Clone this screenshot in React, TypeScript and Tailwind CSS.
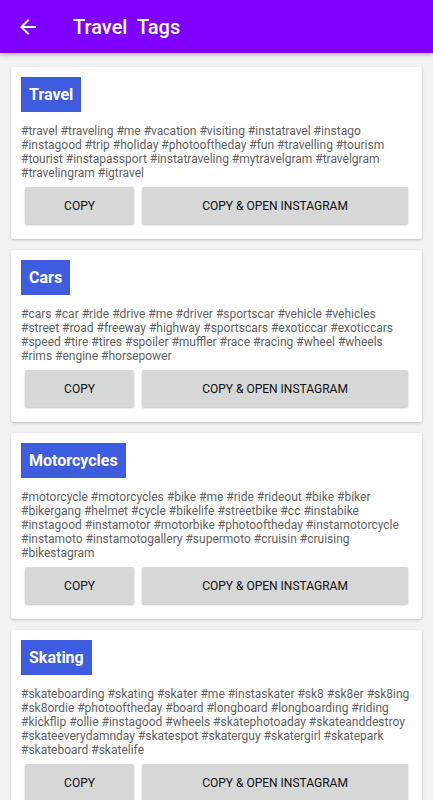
import { FC } from "react";

interface TagGroup {
  id: number;
  title: string;
  tags: string;
}

const groups: TagGroup[] = [
  {
    id: 1,
    title: "Travel",
    tags: "#travel #traveling #me #vacation #visiting #instatravel #instago #instagood #trip #holiday #photooftheday #fun #travelling #tourism #tourist #instapassport #instatraveling #mytravelgram #travelgram #travelingram #igtravel",
  },
  {
    id: 2,
    title: "Cars",
    tags: "#cars #car #ride #drive #me #driver #sportscar #vehicle #vehicles #street #road #freeway #highway #sportscars #exoticcar #exoticcars #speed #tire #tires #spoiler #muffler #race #racing #wheel #wheels #rims #engine #horsepower",
  },
  {
    id: 3,
    title: "Motorcycles",
    tags: "#motorcycle #motorcycles #bike #me #ride #rideout #bike #biker #bikergang #helmet #cycle #bikelife #streetbike #cc #instabike #instagood #instamotor #motorbike #photooftheday #instamotorcycle #instamoto #instamotogallery #supermoto #cruisin #cruising #bikestagram",
  },
  {
    id: 4,
    title: "Skating",
    tags: "#skateboarding #skating #skater #me #instaskater #sk8 #sk8er #sk8ing #sk8ordie #photooftheday #board #longboard #longboarding #riding #kickflip #ollie #instagood #wheels #skatephotoaday #skateanddestroy #skateeverydamnday #skatespot #skaterguy #skatergirl #skatepark #skateboard #skatelife",
  },
];

const BackArrow = () => (
  <svg width="24" height="24" viewBox="0 0 24 24" fill="white">
    <path d="M20 11H7.83l5.59-5.59L12 4l-8 8 8 8 1.41-1.41L7.83 13H20v-2z" />
  </svg>
);

const TagCard: FC<{ group: TagGroup }> = ({ group }) => {
  return (
    <div className="bg-white rounded-[3px] shadow-[0_1px_3px_rgba(0,0,0,0.22)] pt-[10px] pb-[15px] px-[10px]">
      {/* title badge */}
      <div className="inline-flex h-[35px] items-center px-2 bg-[#3d5ce0] text-white font-bold text-[16px]">
        {group.title}
      </div>
      <p className="mt-[12px] text-[12px] leading-[14px] text-[#5f5f5f]">
        {group.tags}
      </p>
      <div className="flex gap-2 px-1 mt-[7px]">
        <button className="w-[109px] h-[37px] bg-[#d6d7d7] rounded-[2px] shadow-[0_1px_2px_rgba(0,0,0,0.25)] text-[12px] text-[#111] uppercase">
          Copy
        </button>
        <button className="flex-1 h-[37px] bg-[#d6d7d7] rounded-[2px] shadow-[0_1px_2px_rgba(0,0,0,0.25)] text-[12px] text-[#111] uppercase">
          Copy &amp; Open Instagram
        </button>
      </div>
    </div>
  );
};

export default function App() {
  return (
    <div className="min-h-[800px] bg-[#f2f2f2] font-['Roboto',sans-serif]">
      <header className="h-[53px] bg-[#7f00ff] flex items-center px-4 shadow-[0_2px_4px_rgba(0,0,0,0.25)] relative z-10">
        <BackArrow />
        <h1 className="ml-[33px] text-white text-[20px] font-medium whitespace-pre">Travel  Tags</h1>
      </header>
      <main className="flex flex-col gap-[11px] px-[11px] pt-[14px] pb-4">
        {groups.map((g) => (
          <TagCard key={g.id} group={g} />
        ))}
      </main>
    </div>
  );
}
